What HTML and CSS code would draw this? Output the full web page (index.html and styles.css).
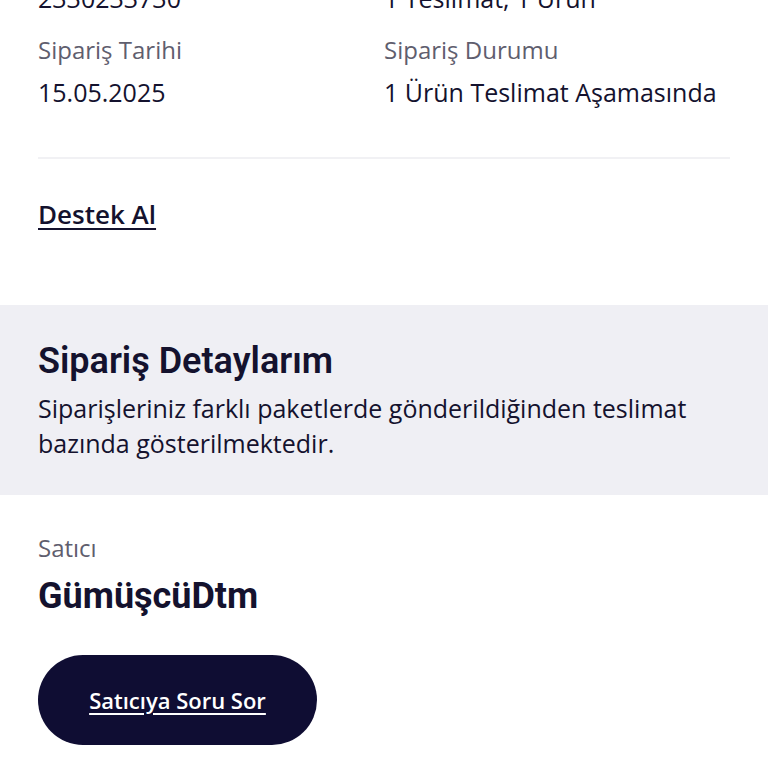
FILE: index.html
```
<!DOCTYPE html>
<html lang="tr">
<head>
    <meta charset="UTF-8">
    <title>Sipariş Detayı</title>
    <link rel="stylesheet" href="styles.css">
</head>
<body>
    <div class="page">
        <div class="summary">
            <div class="info">
                <div class="cell">
                    <span class="label">Sipariş No</span>
                    <span class="value">2330233730</span>
                </div>
                <div class="cell">
                    <span class="label">Teslimat Bilgisi</span>
                    <span class="value">1 Teslimat, 1 Ürün</span>
                </div>
                <div class="cell">
                    <span class="label">Sipariş Tarihi</span>
                    <span class="value">15.05.2025</span>
                </div>
                <div class="cell">
                    <span class="label">Sipariş Durumu</span>
                    <span class="value">1 Ürün Teslimat Aşamasında</span>
                </div>
            </div>
            <div class="divider"></div>
            <a class="support" href="#">Destek Al</a>
        </div>

        <div class="details">
            <h2>Sipariş Detaylarım</h2>
            <p>Siparişleriniz farklı paketlerde gönderildiğinden teslimat bazında gösterilmektedir.</p>
        </div>

        <div class="seller">
            <span class="label">Satıcı</span>
            <div class="seller_name">GümüşcüDtm</div>
            <a class="ask_btn" href="#">Satıcıya Soru Sor</a>
        </div>
    </div>
</body>
</html>
```

FILE: styles.css
```
html, body
{
    margin: 0;
    padding: 0;
    background: #fff;
    overflow: hidden;
}
body
{
    font-family: "Open Sans", "Noto Sans", sans-serif;
    color: #14122e;
}
.page
{
    margin-top: -59px;
}
.summary
{
    padding: 0 38px 0 38px;
}
.info
{
    display: grid;
    grid-template-columns: 346px 1fr;
    row-gap: 22px;
}
.cell
{
    display: flex;
    flex-direction: column;
    gap: 12px;
}
.label
{
    font-size: 24px;
    line-height: 30px;
    color: #5f5e6e;
}
.value
{
    font-size: 25px;
    line-height: 30px;
    color: #14122e;
}
.divider
{
    height: 2px;
    background: #f1f1f4;
    margin-top: 50px;
}
.support
{
    display: inline-block;
    margin: 40px 0 76px 0;
    font-size: 26px;
    line-height: 30px;
    font-weight: 600;
    color: #14122e;
    text-decoration: underline;
    text-underline-offset: 4px;
}
.details
{
    background: #efeff4;
    padding: 36px 38px 34px 38px;
}
.details h2
{
    margin: 0 0 10px 0;
    font-family: "Roboto", sans-serif;
    font-size: 36px;
    line-height: 40px;
    font-weight: 600;
    color: #14122e;
}
.details p
{
    margin: 0;
    font-size: 25px;
    line-height: 35px;
    color: #14122e;
}
.seller
{
    padding: 38px 38px;
    display: flex;
    flex-direction: column;
    align-items: flex-start;
}
.seller_name
{
    margin-top: 13px;
    font-family: "Roboto", sans-serif;
    font-size: 36px;
    line-height: 40px;
    font-weight: 700;
    color: #14122e;
}
.ask_btn
{
    margin-top: 39px;
    width: 279px;
    height: 90px;
    border-radius: 45px;
    background: #0f0d33;
    color: #fff;
    font-size: 22px;
    font-weight: 600;
    display: flex;
    align-items: center;
    justify-content: center;
    text-decoration: underline;
    text-underline-offset: 4px;
}
```
